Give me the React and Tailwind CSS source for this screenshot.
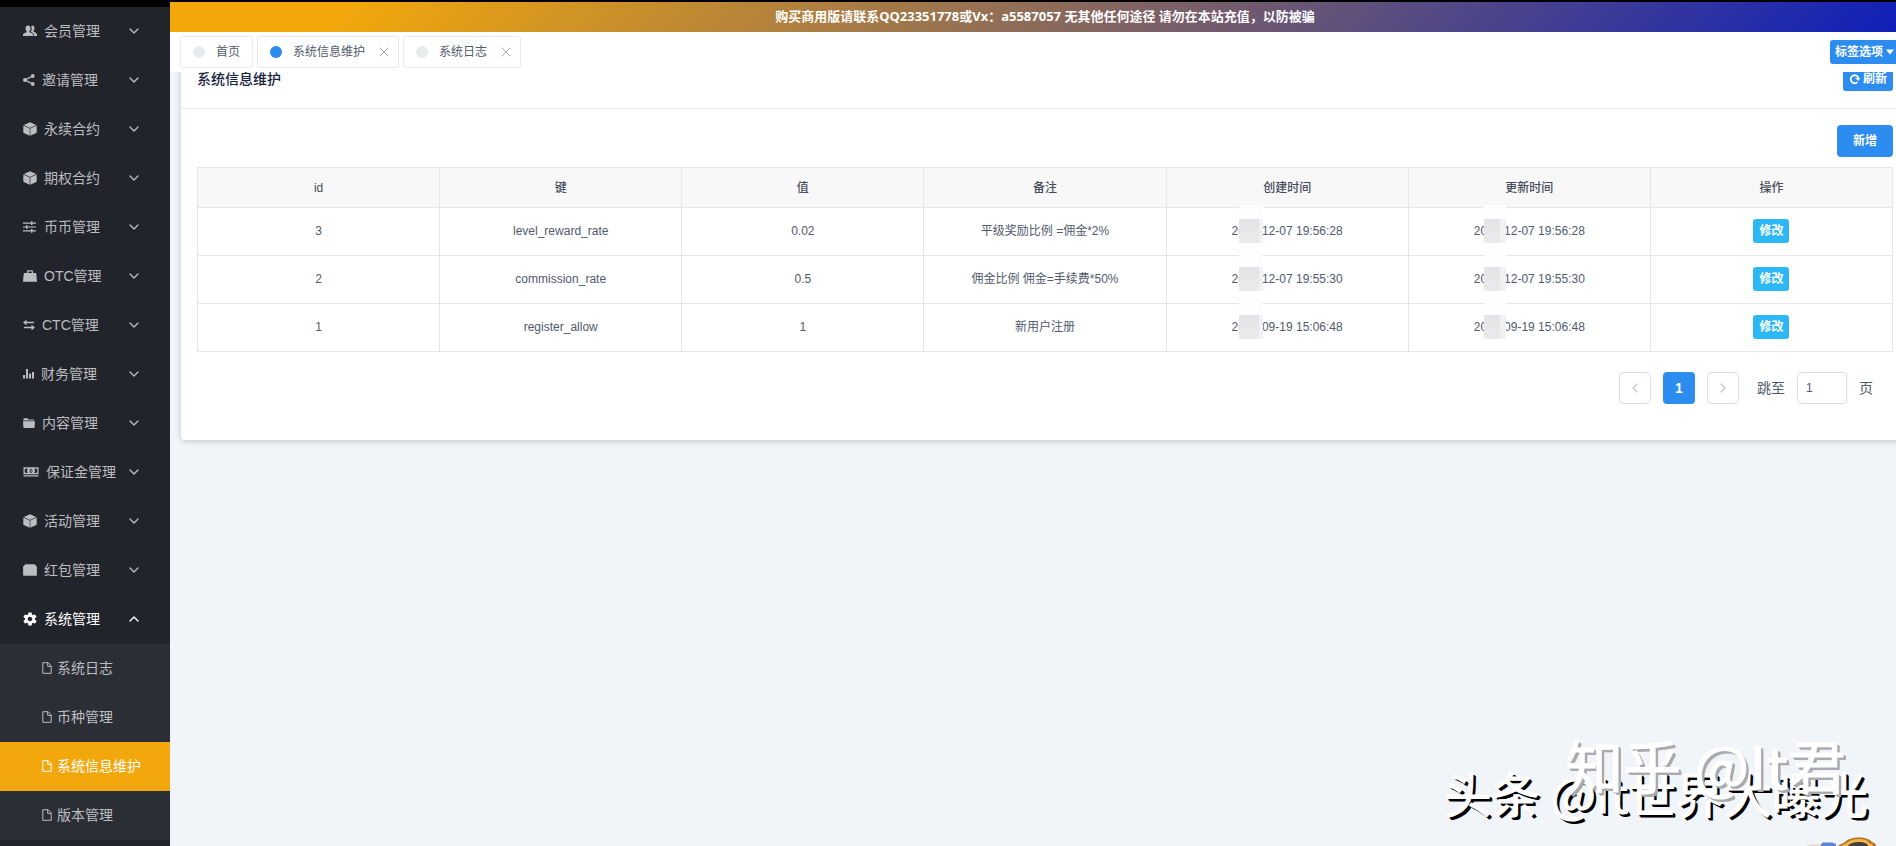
import React, { useState } from "react";
import { ChevronDown, ChevronUp, ChevronLeft, ChevronRight, X } from "lucide-react";
import { IoMdSettings } from "react-icons/io";

const PeopleIcon = () => (
  <svg viewBox="0 0 14 12" className="w-[14px] h-3" fill="currentColor">
    <path d="M5 .5c1.600 0 2.500 1.200 2.500 2.900 0 1.200-.5 2.200-1.100 2.900v1l2.400 1c.9.400 1.200 1 1.200 2.700H0c0-1.700.3-2.300 1.200-2.700l2.400-1v-1C3 5.600 2.500 4.600 2.500 3.400 2.500 1.700 3.400.5 5 .5z" />
    <path d="M8 1c.3-.3.8-.5 1.300-.5 1.400 0 2.200 1 2.200 2.600 0 1.100-.4 2-.9 2.600v1.100l2.100 1c.9.400 1.300 1.300 1.300 3.200h-3.200c0-2-.5-2.800-1.500-3.300L7.900 7V6.500c.5-.8.8-1.800.8-3C8.700 2.500 8.400 1.600 8 1z" />
  </svg>
);

const ShareIcon = () => (
  <svg viewBox="0 0 12 12" className="w-3 h-3" fill="currentColor">
    <path d="M10 1.800 2 6l8 4.200" fill="none" stroke="currentColor" strokeWidth="1.300" />
    <circle cx="9.800" cy="2" r="1.900" />
    <circle cx="2" cy="6" r="2" />
    <circle cx="9.800" cy="10" r="1.900" />
  </svg>
);

const CubeIcon = () => (
  <svg viewBox="0 0 14 14" className="w-[14px] h-[14px]" fill="currentColor">
    <path d="M7 .2 13.200 3 7 6 .8 3z" />
    <path d="M.3 3.500 6.700 6.600v7.200L.8 10.900C.4 10.700.3 10.500.3 10z" />
    <path d="M13.700 3.500 7.300 6.600v7.200l5.900-2.900c.4-.2.5-.4.5-.9z" />
  </svg>
);

const OptionsIcon = () => (
  <svg viewBox="0 0 14 12" className="w-[14px] h-3" fill="currentColor">
    <path d="M0 1.500h8V.3h1.500v1.200H13v1.200H9.500v1.200H8V2.700H0zM0 5.400h3V4.200h1.500v1.200H13v1.200H4.500v1.200H3V6.600H0zM0 9.300h8V8.100h1.500v1.200H13v1.200H9.500v1.200H8v-1.200H0z" />
  </svg>
);

const BagIcon = () => (
  <svg viewBox="0 0 14 12" className="w-[14px] h-3" fill="currentColor">
    <path
      fillRule="evenodd"
      d="M4 3V1.500C4 .7 4.500.2 5.300.2h3.400c.8 0 1.300.5 1.300 1.300V3h2.600c.4 0 .7.3.7.7L14 11.800H0l.7-8.100c0-.4.3-.7.7-.7zm1.200 0h3.600V1.400H5.200z"
    />
  </svg>
);

const SwapIcon = () => (
  <svg viewBox="0 0 12 12" className="w-3 h-3" fill="currentColor">
    <path d="M3.500.8v2H11v1.500H3.500v2L0 3.500zM8.500 5.700 12 8.500l-3.500 2.800v-2H1V7.800h7.500z" />
  </svg>
);

const StatsIcon = () => (
  <svg viewBox="0 0 11 11" className="w-[11px] h-[11px]" fill="currentColor">
    <path d="M0 7h2v3.500H0zM3 1h2v9.500H3zM6 5.500h2v5H6zM9 4h2v6.500H9z" />
  </svg>
);

const FolderIcon = () => (
  <svg viewBox="0 0 12 12" className="w-3 h-3" fill="currentColor">
    <path d="M1 1.300h3.500l1.200 1.200h5.200v1.100H.4V1.900c0-.4.2-.6.600-.6zM0 4.300h12l-.4 6c0 .4-.3.700-.7.700H1.100c-.4 0-.7-.3-.7-.7z" />
  </svg>
);

const CashIcon = () => (
  <svg viewBox="0 0 16 10" className="w-4 h-[10px]" fill="currentColor">
    <path
      fillRule="evenodd"
      d="M.5.300h15v7h-15zM1.700 2.500v2.600l1 1h2.200C4.300 5.500 4 4.700 4 3.800s.3-1.700.9-2.300H2.700zM14.300 2.500l-1-1h-2.200c.6.600.9 1.400.9 2.300s-.3 1.700-.9 2.300h2.200l1-1zM8 1.700c-.9 0-1.500.9-1.500 2.100S7.100 5.900 8 5.900s1.500-.9 1.500-2.100S8.900 1.700 8 1.700z"
    />
    <path d="M.5 8.300h15v1.200H.5zM7.500 2.500h1v2.600h-1z" />
  </svg>
);

const PacketIcon = () => (
  <svg viewBox="0 0 14 12" className="w-[14px] h-3" fill="currentColor">
    <path d="M2.500.3h9L13.600 2.300c.2.300.3.500.3.900v7.700c0 .5-.3.800-.8.800H.9c-.5 0-.8-.3-.8-.8V3.200c0-.4.1-.6.3-.9z" />
  </svg>
);

const DocIcon = () => (
  <svg viewBox="0 0 10 12" className="w-[10px] h-3" fill="none" stroke="currentColor">
    <path d="M.8.700h5.400l3 3.200v7.400H.8z" />
    <path d="M5.700.700v3.700h3.500" />
  </svg>
);

const RefreshIcon = () => (
  <svg viewBox="0 0 12 12" className="w-3 h-3" fill="none" stroke="currentColor">
    <path d="M8.500 9.100A4 4 0 1 1 9.500 5" strokeWidth="1.800" />
    <path d="M6.300 5h5L9 8z" fill="currentColor" stroke="none" />
  </svg>
);

const menus = [
  { name: "会员管理", icon: <PeopleIcon /> },
  { name: "邀请管理", icon: <ShareIcon /> },
  { name: "永续合约", icon: <CubeIcon /> },
  { name: "期权合约", icon: <CubeIcon /> },
  { name: "币币管理", icon: <OptionsIcon /> },
  { name: "OTC管理", icon: <BagIcon /> },
  { name: "CTC管理", icon: <SwapIcon /> },
  { name: "财务管理", icon: <StatsIcon /> },
  { name: "内容管理", icon: <FolderIcon /> },
  { name: "保证金管理", icon: <CashIcon /> },
  { name: "活动管理", icon: <CubeIcon /> },
  { name: "红包管理", icon: <PacketIcon /> },
  {
    name: "系统管理",
    icon: <IoMdSettings className="w-4 h-4 -mx-[1px]" />,
    children: ["系统日志", "币种管理", "系统信息维护", "版本管理"],
  },
];

const tabs = [
  { name: "首页", closable: false },
  { name: "系统信息维护", closable: true },
  { name: "系统日志", closable: true },
];

const columns = ["id", "键", "值", "备注", "创建时间", "更新时间", "操作"];

const rows = [
  { id: 3, key: "level_reward_rate", value: "0.02", remark: "平级奖励比例 =佣金*2%", time: "12-07 19:56:28" },
  { id: 2, key: "commission_rate", value: "0.5", remark: "佣金比例 佣金=手续费*50%", time: "12-07 19:55:30" },
  { id: 1, key: "register_allow", value: "1", remark: "新用户注册", time: "09-19 15:06:48" },
];

// Date whose year is masked by a mosaic block
const MaskedDate = ({ time, wide }) => (
  <span className="relative inline-flex items-center">
    20
    <span className="w-[17px]"></span>
    {time}
    <span className={`absolute bottom-1/2 h-[26px] bg-[#fdfdfd] ${wide ? "left-[7px] w-6" : "left-[10px] w-[22px]"}`}></span>
    <span className={`absolute h-6 flex ${wide ? "left-[7px] w-6" : "left-[10px] w-[22px]"}`}>
      <span className={`bg-linear-to-b from-[#e4e4e6] to-[#ebebed] ${wide ? "w-5" : "w-4"}`}></span>
      <span className="flex-1 bg-[#f1f1f2]"></span>
    </span>
  </span>
);

const Sidebar = () => {
  const [active, setActive] = useState("系统信息维护");

  return (
    <aside className="w-[170px] shrink-0 pt-[7px] bg-black overflow-hidden">
      <nav className="min-h-full bg-[#22242c] text-sm text-[#bcbdc0]">
        {menus.map((item) => (
          <div key={item.name}>
            <button
              className={`w-full h-[49px] pl-[23px] pr-7 pb-[2px] flex items-center cursor-pointer ${item.children ? "text-white" : ""}`}
            >
              {item.icon}
              <span className="ml-[7px] mr-auto whitespace-nowrap">{item.name}</span>
              {item.children ? (
                <ChevronUp className="w-4 h-4 shrink-0" />
              ) : (
                <ChevronDown className="w-4 h-4 shrink-0" />
              )}
            </button>
            {item.children?.map((child) => (
              <a
                key={child}
                href="#"
                onClick={() => setActive(child)}
                className={`h-[49px] pl-[42px] pb-[2px] flex items-center gap-[5px] ${active === child ? "bg-[#f2a80c] text-white" : "bg-[#2c2e36]"}`}
              >
                <DocIcon />
                {child}
              </a>
            ))}
          </div>
        ))}
      </nav>
    </aside>
  );
};

const App = () => {
  const [current, setCurrent] = useState("系统信息维护");
  const [page, setPage] = useState("1");

  return (
    <div className="relative h-screen flex overflow-hidden bg-black font-['Liberation_Sans','Noto_Sans_CJK_SC',sans-serif] text-[#515a6e]">
      <Sidebar />

      <main className="flex-1 min-w-0 mt-[2px] flex flex-col bg-[#f1f4f9]">
        <div className="h-[30px] shrink-0 pl-6 flex items-center justify-center bg-[linear-gradient(135deg,#f3a80a_10%,#0f20ba)] text-white text-[13px] font-bold font-['Noto_Sans','Noto_Sans_CJK_SC',sans-serif]">
          购买商用版请联系QQ23351778或Vx：a5587057 无其他任何途径 请勿在本站充值，以防被骗
        </div>

        {/* Opened tabs */}
        <div className="h-10 shrink-0 pl-[10px] flex items-center gap-1 bg-white overflow-hidden">
          {tabs.map((tab) => (
            <div
              key={tab.name}
              className="h-8 pl-3 flex items-center border border-[#e8eaec] rounded-[3px] text-xs"
            >
              <button onClick={() => setCurrent(tab.name)} className="flex items-center gap-[11px] cursor-pointer">
                <span
                  className={`w-3 h-3 rounded-full ${current === tab.name ? "bg-[#2d8cf0]" : "bg-[#e8eaec]"}`}
                ></span>
                {tab.name}
              </button>
              {tab.closable ? (
                <button aria-label="关闭" className="ml-[11px] mr-[6px] text-[#aaa] cursor-pointer">
                  <X className="w-4 h-4" strokeWidth={1.5} />
                </button>
              ) : (
                <span className="w-3"></span>
              )}
            </div>
          ))}
          <button className="ml-auto -mr-[6px] h-6 pl-[5px] pr-2 flex items-center gap-[3px] rounded-[3px] bg-[#2d8cf0] text-white text-xs font-bold whitespace-nowrap cursor-pointer">
            标签选项
            <svg viewBox="0 0 8 6" className="w-2 h-[6px]" fill="currentColor">
              <path d="M0 .5h8L4 5.500z" />
            </svg>
          </button>
        </div>

        <div className="flex-1 min-h-0 overflow-hidden">
          <section className="-mt-4 ml-[11px] -mr-[13px] bg-white rounded shadow-[0_1px_6px_rgba(0,0,0,0.2)]">
            <header className="h-[53px] px-4 pt-[11px] flex items-start justify-between border-b border-[#e8eaec]">
              <h1 className="text-sm leading-6 font-medium text-[#17233d]">系统信息维护</h1>
              <button className="h-6 px-[6px] flex items-center gap-[2px] rounded-[3px] bg-[#2d8cf0] text-white text-xs font-bold cursor-pointer">
                <RefreshIcon />
                刷新
              </button>
            </header>

            <div className="px-4 pt-4 pb-9">
              <div className="flex justify-end">
                <button className="h-8 px-4 rounded bg-[#2d8cf0] text-white text-xs font-bold cursor-pointer">
                  新增
                </button>
              </div>

              <table className="w-full mt-[10px] table-fixed border-collapse border border-[#dcdee2] text-xs text-center">
                <thead>
                  <tr className="h-10 bg-[#f8f8f9]">
                    {columns.map((col) => (
                      <th key={col} className="border border-[#e4e6e9] font-medium text-[#464c5b]">
                        {col}
                      </th>
                    ))}
                  </tr>
                </thead>
                <tbody>
                  {rows.map((row) => (
                    <tr key={row.id} className="h-12">
                      <td className="pb-[2px] border border-[#e4e6e9]">{row.id}</td>
                      <td className="pb-[2px] border border-[#e4e6e9]">{row.key}</td>
                      <td className="pb-[2px] border border-[#e4e6e9]">{row.value}</td>
                      <td className="pb-[2px] border border-[#e4e6e9]">{row.remark}</td>
                      <td className="pb-[2px] border border-[#e4e6e9]">
                        <MaskedDate time={row.time} wide />
                      </td>
                      <td className="pb-[2px] border border-[#e4e6e9]">
                        <MaskedDate time={row.time} />
                      </td>
                      <td className="pb-[2px] border border-[#e4e6e9]">
                        <button className="h-6 px-[6px] rounded-[3px] bg-[#2db7f5] text-white font-bold align-middle cursor-pointer">
                          修改
                        </button>
                      </td>
                    </tr>
                  ))}
                </tbody>
              </table>

              <div className="mt-5 pr-5 flex items-center justify-end gap-3 text-sm">
                <button
                  aria-label="上一页"
                  disabled
                  className="w-8 h-8 flex items-center justify-center rounded border border-[#dcdee2] text-[#c5c8ce]"
                >
                  <ChevronLeft className="w-4 h-4" />
                </button>
                <button className="w-8 h-8 rounded bg-[#2d8cf0] text-white font-bold cursor-pointer">1</button>
                <button
                  aria-label="下一页"
                  disabled
                  className="w-8 h-8 flex items-center justify-center rounded border border-[#dcdee2] text-[#c5c8ce]"
                >
                  <ChevronRight className="w-4 h-4" />
                </button>
                <label htmlFor="page" className="ml-[6px]">
                  跳至
                </label>
                <input
                  id="page"
                  value={page}
                  onChange={(e) => setPage(e.target.value)}
                  type="text"
                  className="w-[50px] h-8 px-2 rounded border border-[#dcdee2] text-xs outline-none"
                />
                <span>页</span>
              </div>
            </div>
          </section>
        </div>
      </main>

      {/* Watermarks */}
      <p className="absolute right-7 bottom-6 text-5xl leading-[60px] font-['Noto_Sans_CJK_SC',sans-serif] text-white [-webkit-text-stroke:1px_white] [text-shadow:2px_2px_0_#000,3px_3px_0_#000] whitespace-nowrap pointer-events-none">
        头条 @It世界大曝光
      </p>
      <p className="absolute right-[50px] bottom-[52px] text-[58px] leading-[60px] font-['Noto_Sans_CJK_SC',sans-serif] text-white [-webkit-text-stroke:1px_white] [text-shadow:2px_2px_0_#a9abae,3px_3px_0_#a9abae] whitespace-nowrap pointer-events-none">
        知乎 @It君
      </p>
      <svg viewBox="0 0 72 9" className="absolute right-5 bottom-0 w-[72px] h-[9px]">
        <path d="M2 9 8 7.500h10V9z" fill="#e9d3c4" />
        <path d="M17 9v-2l2-1.500h9l4 1.500v2z" fill="#5b86d0" />
        <path d="M34 9c2-2 4-2 7-4 3-3 7-4.500 14-4.500S66 2.500 68 5c3 1 4 2 4 4z" fill="#b5762a" />
        <path d="M37 9c3-2 5-2 7-4 3-2 6-3 11-3s8 1 10 4c2 1 4 1 4 3z" fill="#f0b749" />
        <path d="M44 9c2-3 6-4 11-4s8 1 9 4z" fill="#4a4038" />
      </svg>
    </div>
  );
};

export default App;
